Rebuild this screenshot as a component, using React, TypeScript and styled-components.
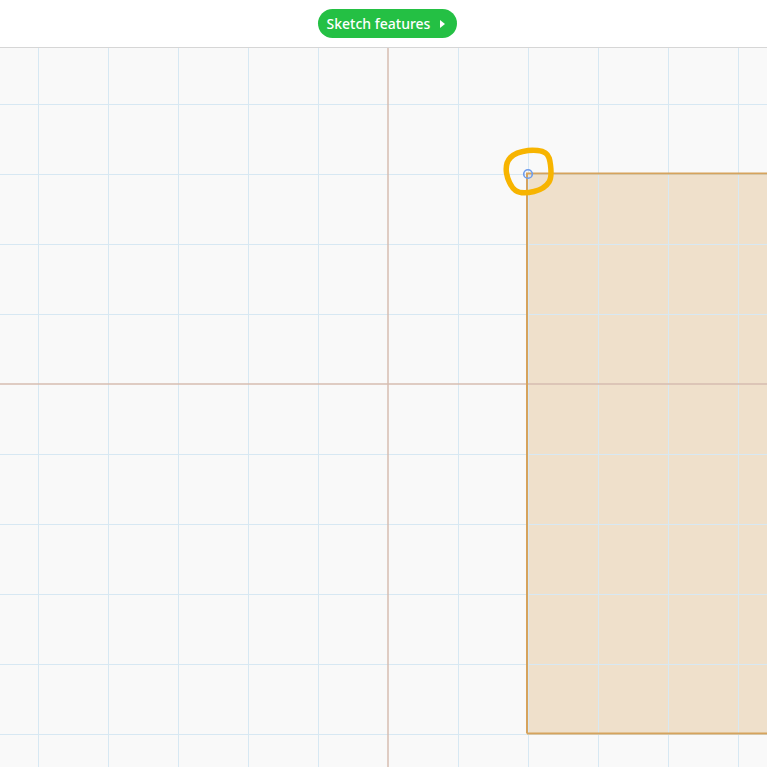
import React from "react";
import styled, { createGlobalStyle } from "styled-components";

const Global = createGlobalStyle`
  html, body { margin: 0; padding: 0; background: #f9f9f9; overflow: hidden; }
  body { font-family: "Noto Sans", "Open Sans", sans-serif; }
`;

const Page = styled.div`
  display: flex;
  flex-direction: column;
  width: 767px;
  height: 767px;
`;

const TopBar = styled.header`
  height: 47px;
  flex: 0 0 47px;
  background: #ffffff;
  border-bottom: 1px solid #d6d6d6;
  display: flex;
  align-items: center;
  justify-content: center;
`;

const PillButton = styled.button`
  display: inline-flex;
  align-items: center;
  gap: 10px;
  height: 29px;
  padding: 0 12px 0 9px;
  margin-left: 8px;
  border: none;
  border-radius: 15px;
  background: #24c044;
  color: #ffffff;
  font-family: "Noto Sans", "Open Sans", sans-serif;
  font-size: 14px;
  font-weight: 500;
  cursor: pointer;
`;

const Canvas = styled.svg`
  display: block;
  flex: 1 1 auto;
  width: 767px;
  background: #f9f9f9;
`;

const W = 767;
const H = 719;
const ox = 388;
const oy = 336;

function closedCatmull(pts: [number, number][]): string {
  const n = pts.length;
  let d = `M${pts[0][0]} ${pts[0][1]}`;
  for (let i = 0; i < n; i++) {
    const p0 = pts[(i - 1 + n) % n];
    const p1 = pts[i];
    const p2 = pts[(i + 1) % n];
    const p3 = pts[(i + 2) % n];
    const c1x = p1[0] + (p2[0] - p0[0]) / 6;
    const c1y = p1[1] + (p2[1] - p0[1]) / 6;
    const c2x = p2[0] - (p3[0] - p1[0]) / 6;
    const c2y = p2[1] - (p3[1] - p1[1]) / 6;
    d += ` C${c1x.toFixed(1)} ${c1y.toFixed(1)} ${c2x.toFixed(1)} ${c2y.toFixed(1)} ${p2[0]} ${p2[1]}`;
  }
  return d + " Z";
}

const scribble: [number, number][] = [
  [528, 102.5],
  [545.5, 105],
  [550.5, 117],
  [549, 134],
  [534, 143.5],
  [515.5, 142.5],
  [506.5, 125],
  [510.5, 109.5],
];

export default function App() {
  const vx: number[] = [];
  for (let x = ox % 70; x < W; x += 70) if (x !== ox) vx.push(x);
  const hy: number[] = [];
  for (let y = oy % 70; y < H; y += 70) if (y !== oy) hy.push(y);

  return (
    <Page>
      <Global />
      <TopBar>
        <PillButton>
          Sketch features
          <svg width="5" height="8" viewBox="0 0 5 8">
            <path d="M0 0 L5 4 L0 8 Z" fill="#fff" />
          </svg>
        </PillButton>
      </TopBar>
      <Canvas viewBox={`0 0 ${W} ${H}`} height={H}>
        <rect x={527} y={125.5} width={260} height={560} fill="#eddcc3" fillOpacity={0.85} />
        {vx.map((x) => (
          <line key={"v" + x} x1={x + 0.5} y1={0} x2={x + 0.5} y2={H} stroke="#d7e8f3" strokeWidth={1} />
        ))}
        {hy.map((y) => (
          <line key={"h" + y} x1={0} y1={y + 0.5} x2={W} y2={y + 0.5} stroke="#d7e8f3" strokeWidth={1} />
        ))}
        <line x1={ox} y1={0} x2={ox} y2={H} stroke="#d6bcb1" strokeWidth={1.5} />
        <line x1={0} y1={oy} x2={W} y2={oy} stroke="#d6bcb1" strokeWidth={1.5} />
        <path
          d={`M527 685.5 L527 125.5 L790 125.5 M527 685.5 L790 685.5`}
          fill="none"
          stroke="#d6a35d"
          strokeWidth={2}
        />
        <path
          d={closedCatmull(scribble)}
          fill="none"
          stroke="#f7b400"
          strokeWidth={5.5}
          strokeLinejoin="round"
        />
        <circle cx={528} cy={126} r={4.3} fill="none" stroke="#6d9cec" strokeWidth={1.6} />
      </Canvas>
    </Page>
  );
}
